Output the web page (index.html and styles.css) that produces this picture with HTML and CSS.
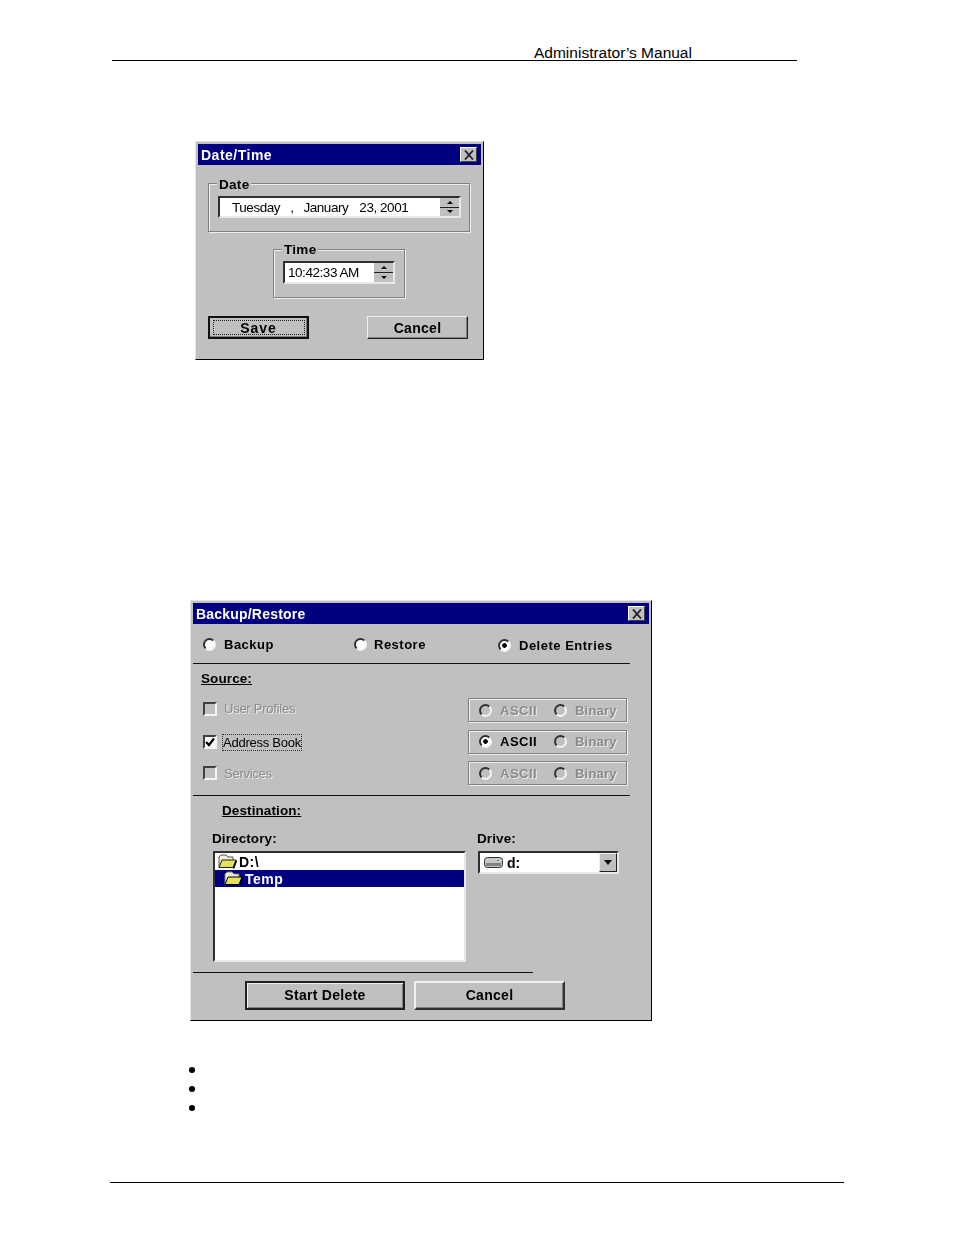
FILE: index.html
```html
<!DOCTYPE html>
<html lang="en">
<head>
  <meta charset="UTF-8" />
  <title>Administrator's Manual</title>
  <link rel="stylesheet" href="styles.css">
</head>
<body>
  <div class="page-head">Administrator’s Manual</div>

  <!-- Date/Time dialog -->
  <div class="dialog date-dialog">
    <div class="title-bar title-wide">
      <span>Date/Time</span>
      <span class="close"><svg width="12" height="10" viewBox="0 0 12 10"><path d="M2 0.5 L10 9.5 M10 0.5 L2 9.5" stroke="#202020" stroke-width="1.8" fill="none"/></svg></span>
    </div>
    <div class="date-body">
      <div class="group date-group">
        <span class="group-label date-label">Date</span>
        <div class="field date-field">
          <span class="field-text date-text"><span>Tuesday</span><span class="d-comma">,</span><span class="d-month">January</span><span class="d-day">23, 2001</span></span>
          <span class="spin"><span class="spin-btn"><i class="up"></i></span><span class="spin-btn"><i class="down"></i></span></span>
        </div>
      </div>
      <div class="group time-group">
        <span class="group-label">Time</span>
        <div class="field time-field">
          <span class="field-text time-text">10:42:33 AM</span>
          <span class="spin"><span class="spin-btn"><i class="up"></i></span><span class="spin-btn"><i class="down"></i></span></span>
        </div>
      </div>
      <div class="date-buttons">
        <div class="btn btn-default"><span class="focus-box">Save</span></div>
        <div class="btn">Cancel</div>
      </div>
    </div>
  </div>

  <!-- Backup/Restore dialog -->
  <div class="dialog backup-dialog">
    <div class="title-bar">
      <span>Backup/Restore</span>
      <span class="close"><svg width="12" height="10" viewBox="0 0 12 10"><path d="M2 0.5 L10 9.5 M10 0.5 L2 9.5" stroke="#202020" stroke-width="1.8" fill="none"/></svg></span>
    </div>
    <div class="mode-row">
      <div class="mode mode-backup"><i class="radio"></i>Backup</div>
      <div class="mode mode-restore"><i class="radio"></i>Restore</div>
      <div class="mode mode-delete"><i class="radio on"></i>Delete Entries</div>
    </div>
    <div class="rule"></div>
    <div class="source">
      <div class="section-title">Source:</div>
      <div class="source-rows">
        <div class="source-row">
          <div class="check-wrap disabled raised"><i class="check"></i>User Profiles</div>
          <div class="format disabled"><i class="radio dim"></i><span class="f-ascii">ASCII</span><i class="radio dim"></i><span>Binary</span></div>
        </div>
        <div class="source-row">
          <div class="check-wrap"><i class="check checked"><svg width="10" height="10" viewBox="0 0 10 10"><path d="M1 5 L4 8 L9 1.5" stroke="#000" stroke-width="2.2" fill="none"/></svg></i><span class="focus-label">Address Book</span></div>
          <div class="format"><i class="radio on"></i><span class="f-ascii">ASCII</span><i class="radio dim"></i><span class="off-text">Binary</span></div>
        </div>
        <div class="source-row">
          <div class="check-wrap disabled"><i class="check"></i>Services</div>
          <div class="format disabled"><i class="radio dim"></i><span class="f-ascii">ASCII</span><i class="radio dim"></i><span>Binary</span></div>
        </div>
      </div>
    </div>
    <div class="rule"></div>
    <div class="section-title dest-title">Destination:</div>
    <div class="dest-grid">
      <div>
        <div class="small-label">Directory:</div>
        <div class="dir-list">
          <div class="dir-item">
            <svg width="19" height="15" viewBox="0 0 19 15"><path d="M1 13 V3 L3 1 H8 L10 3 H15 V6" fill="#f0f0d8" stroke="#505050"/><path d="M1 13.5 L4 6 H18 L15 13.5 Z" fill="#e6e05a" stroke="#202020"/><path d="M18.5 6.5 L15.5 14.5" stroke="#000" stroke-width="1.5"/></svg>
            <span>D:\</span>
          </div>
          <div class="dir-item selected">
            <svg width="19" height="15" viewBox="0 0 19 15"><path d="M1 13 V3 L3 1 H8 L10 3 H15 V6" fill="#f0f0d8" stroke="#808060"/><path d="M1 13.5 L4 6 H18 L15 13.5 Z" fill="#e6e05a" stroke="#000"/><path d="M18.5 6.5 L15.5 14.5" stroke="#000" stroke-width="1.5"/></svg>
            <span>Temp</span>
          </div>
        </div>
      </div>
      <div>
        <div class="small-label">Drive:</div>
        <div class="combo">
          <svg class="drive-icon" width="19" height="11" viewBox="0 0 19 11"><rect x="0.5" y="0.5" width="18" height="10" rx="3" fill="#c8c8c8" stroke="#303030"/><rect x="2" y="6" width="15" height="3" fill="#808080"/><rect x="13" y="3" width="2" height="1" fill="#20b040"/></svg>
          <span class="combo-text">d:</span>
          <span class="combo-btn"><i class="down big"></i></span>
        </div>
      </div>
    </div>
    <div class="rule rule-low"></div>
    <div class="backup-buttons">
      <div class="btn btn-start">Start Delete</div>
      <div class="btn btn-cancel">Cancel</div>
    </div>
  </div>

  <ul class="bullets">
    <li></li>
    <li></li>
    <li></li>
  </ul>

  <div class="page-foot"></div>
</body>
</html>
```

FILE: styles.css
```css
body {
  margin: 0;
  background: #fff;
  color: #000;
  font-family: "Liberation Sans", Arial, sans-serif;
}
i {
  display: block;
  flex: none;
}

/* page furniture */
.page-head {
  box-sizing: border-box;
  width: 685px;
  height: 61px;
  margin-left: 112px;
  padding: 45px 0 0 422px;
  border-bottom: 1px solid #000;
  font-size: 15.5px;
  line-height: 15px;
  white-space: nowrap;
}
.page-foot {
  width: 734px;
  margin: 66px 0 0 110px;
  border-top: 1px solid #000;
}
.bullets {
  margin: 38px 0 0;
  padding: 0 0 0 208px;
  font-size: 21px;
  line-height: 19px;
}
.bullets li {
  height: 19px;
}

/* dialogs */
.dialog {
  box-sizing: border-box;
  background: #c0c0c0;
  border: 1px solid;
  border-color: #e4e4e4 #000 #000 #e4e4e4;
  padding: 2px;
  font-size: 13px;
  font-weight: bold;
  letter-spacing: 0.5px;
  filter: blur(0.4px);
}
.date-dialog {
  width: 289px;
  height: 219px;
  margin: 80px 0 0 195px;
}
.backup-dialog {
  width: 462px;
  height: 421px;
  margin: 240px 0 0 190px;
}
.title-bar {
  display: flex;
  justify-content: space-between;
  align-items: center;
  height: 21px;
  padding: 0 4px 0 3px;
  background: #000080;
  color: #fff;
  font-size: 14px;
  letter-spacing: 0.2px;
}
.title-wide {
  letter-spacing: 0.5px;
}
.close {
  display: flex;
  align-items: center;
  justify-content: center;
  box-sizing: border-box;
  width: 17px;
  height: 15px;
  background: #c0c0c0;
  border: 1px solid;
  border-color: #fff #404040 #404040 #fff;
}

/* date dialog */
.date-body {
  padding: 18px 0 0 10px;
}
.group {
  position: relative;
  box-sizing: border-box;
  border: 1px solid #808080;
  box-shadow: 1px 1px 0 #efefef, inset 1px 1px 0 #efefef;
}
.group-label {
  position: absolute;
  top: -8px;
  left: 8px;
  padding: 0 2px;
  background: #c0c0c0;
  font-size: 13.5px;
  line-height: 16px;
  letter-spacing: 0.3px;
}
.date-label {
  top: -7px;
}
.date-group {
  width: 262px;
  height: 49px;
  padding: 12px 0 0 9px;
}
.time-group {
  width: 132px;
  height: 49px;
  margin: 17px 0 0 65px;
  padding: 11px 0 0 9px;
}
.field {
  display: flex;
  box-sizing: border-box;
  height: 22px;
  background: #fff;
  border: 2px solid;
  border-color: #303030 #e8e8e8 #e8e8e8 #303030;
  font-weight: normal;
  letter-spacing: -0.45px;
}
.date-field {
  width: 243px;
}
.time-field {
  width: 112px;
  height: 23px;
}
.field-text {
  flex: 1;
  font-size: 13.5px;
  line-height: 19px;
  white-space: nowrap;
}
.date-text {
  display: flex;
  padding-left: 12px;
}
.d-comma {
  margin-left: 10px;
}
.d-month {
  margin-left: 10px;
}
.d-day {
  margin-left: 11px;
}
.time-text {
  padding-left: 3px;
}
.spin {
  display: flex;
  flex-direction: column;
  gap: 1px;
  width: 19px;
  background: #202020;
}
.spin-btn {
  flex: 1;
  display: flex;
  align-items: center;
  justify-content: center;
  background: #c0c0c0;
}
.up {
  border: 3px solid transparent;
  border-top: 0;
  border-bottom-color: #000;
}
.down {
  border: 3px solid transparent;
  border-bottom: 0;
  border-top-color: #000;
}
.date-buttons {
  display: flex;
  justify-content: space-between;
  width: 260px;
  margin-top: 18px;
}

/* buttons */
.btn {
  display: flex;
  align-items: center;
  justify-content: center;
  box-sizing: border-box;
  width: 101px;
  height: 23px;
  background: #c0c0c0;
  border: 1px solid;
  border-color: #f0f0f0 #202020 #202020 #f0f0f0;
  box-shadow: inset -1px -1px 0 #808080;
  font-size: 14px;
  letter-spacing: 0.3px;
}
.btn-default {
  border: 2px solid #101010;
  letter-spacing: 1px;
}
.focus-box {
  box-sizing: border-box;
  width: 92px;
  height: 15px;
  border: 1px dotted #202020;
  line-height: 14px;
  text-align: center;
}

/* backup dialog */
.mode-row {
  display: flex;
  align-items: center;
  height: 39px;
  padding-left: 10px;
}
.mode {
  display: flex;
  align-items: center;
  gap: 8px;
  padding-top: 1px;
  white-space: nowrap;
}
.mode-backup {
  width: 151px;
}
.mode-restore {
  width: 144px;
  gap: 7px;
}
.mode-delete {
  padding-top: 3px;
}
.radio {
  box-sizing: border-box;
  width: 13px;
  height: 13px;
  border-radius: 50%;
  background: #fff;
  border: 2px solid;
  border-color: #303030 #f4f4f4 #f4f4f4 #303030;
}
.radio.on {
  background: radial-gradient(circle, #000 0, #000 2px, #fff 2.6px);
}
.radio.dim {
  background: #c0c0c0;
}
.rule {
  width: 437px;
  height: 1px;
  background: #101010;
}
.rule-low {
  width: 340px;
  margin-top: 10px;
}
.source {
  padding: 8px 0 10px 8px;
}
.section-title {
  padding-bottom: 2px;
  font-size: 13.5px;
  line-height: 13px;
  text-decoration: underline;
  letter-spacing: 0.1px;
}
.source-rows {
  display: flex;
  flex-direction: column;
  gap: 7.5px;
  width: 424px;
  margin: 11px 0 0 2px;
}
.source-row {
  display: flex;
  justify-content: space-between;
  align-items: center;
  height: 24px;
}
.check-wrap {
  display: flex;
  align-items: center;
  gap: 7px;
  font-weight: normal;
  letter-spacing: -0.25px;
}
.raised {
  line-height: 12px;
  margin-top: -2px;
}
.check {
  display: flex;
  align-items: center;
  justify-content: center;
  box-sizing: border-box;
  width: 14px;
  height: 14px;
  border: 2px solid;
  border-color: #404040 #f4f4f4 #f4f4f4 #404040;
}
.check.checked {
  background: #fff;
}
.disabled {
  color: #8a8a8a;
  text-shadow: 1px 1px 0 #ececec;
}
.focus-label {
  margin: 1px 0 0 -1px;
  outline: 1px dotted #303030;
  line-height: 15px;
}
.format {
  display: flex;
  align-items: center;
  box-sizing: border-box;
  width: 159px;
  height: 24px;
  padding-left: 10px;
  border: 1px solid #808080;
  box-shadow: 1px 1px 0 #efefef, inset 1px 1px 0 #efefef;
  letter-spacing: 0.2px;
}
.format .radio {
  margin-right: 8px;
}
.f-ascii {
  width: 54px;
  letter-spacing: 0.5px;
}
.off-text {
  color: #8a8a8a;
  text-shadow: 1px 1px 0 #ececec;
}
.dest-title {
  margin: 8px 0 0 29px;
}
.dest-grid {
  display: grid;
  grid-template-columns: 265px 142px;
  margin: 13px 0 0 19px;
}
.small-label {
  padding-bottom: 2px;
  font-size: 13.5px;
  line-height: 13px;
  letter-spacing: 0.1px;
}
.dir-list {
  box-sizing: border-box;
  width: 253px;
  height: 111px;
  margin: 4px 0 0 1px;
  background: #fff;
  border: 2px solid;
  border-color: #303030 #e8e8e8 #e8e8e8 #303030;
  font-size: 14px;
}
.dir-item {
  display: flex;
  align-items: center;
  gap: 2px;
  height: 17px;
  padding-left: 3px;
}
.dir-item.selected {
  padding-left: 9px;
  background: #000080;
  color: #fff;
}
.combo {
  display: flex;
  align-items: center;
  box-sizing: border-box;
  width: 141px;
  height: 23px;
  margin: 4px 0 0 1px;
  background: #fff;
  border: 2px solid;
  border-color: #303030 #e8e8e8 #e8e8e8 #303030;
  font-size: 14px;
  letter-spacing: 0;
}
.drive-icon {
  margin-left: 4px;
}
.combo-text {
  flex: 1;
  margin-left: 4px;
}
.combo-btn {
  display: flex;
  align-items: center;
  justify-content: center;
  box-sizing: border-box;
  width: 18px;
  height: 19px;
  background: #c0c0c0;
  border: 1px solid;
  border-color: #f0f0f0 #202020 #202020 #f0f0f0;
}
.down.big {
  border-width: 5px 4px 0;
}
.backup-buttons {
  display: flex;
  gap: 9px;
  margin: 8px 0 0 52px;
}
.btn-start {
  width: 160px;
  height: 29px;
  padding-bottom: 2px;
  border: 2px solid #202020;
  box-shadow: inset 1px 1px 0 #f0f0f0, inset -1px -1px 0 #808080;
}
.btn-cancel {
  width: 151px;
  height: 29px;
  padding-bottom: 2px;
  border-width: 2px;
  border-color: #f0f0f0 #303030 #303030 #f0f0f0;
}
```
